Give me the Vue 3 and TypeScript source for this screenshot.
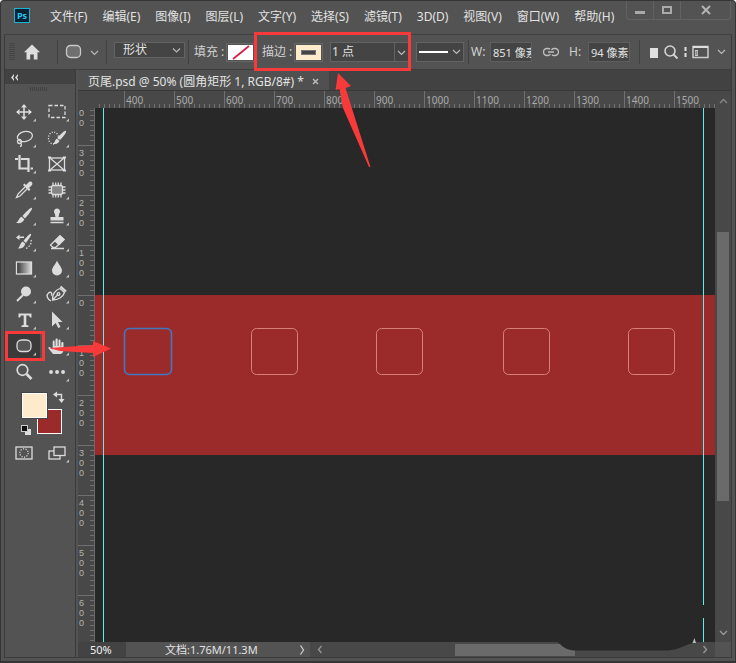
<script setup lang="ts">
import { ref } from 'vue'

const menus: string[] = [
  '文件(F)', '编辑(E)', '图像(I)', '图层(L)', '文字(Y)', '选择(S)',
  '滤镜(T)', '3D(D)', '视图(V)', '窗口(W)', '帮助(H)',
]

interface Tool { id: string; label: string; corner: boolean }

const tools: Tool[] = [
  { id: 'move', label: '移动工具', corner: true },
  { id: 'marquee', label: '矩形选框工具', corner: true },
  { id: 'lasso', label: '套索工具', corner: true },
  { id: 'quick', label: '快速选择工具', corner: true },
  { id: 'crop', label: '裁剪工具', corner: true },
  { id: 'frame', label: '图框工具', corner: false },
  { id: 'dropper', label: '吸管工具', corner: true },
  { id: 'heal', label: '修补工具', corner: true },
  { id: 'brush', label: '画笔工具', corner: true },
  { id: 'stamp', label: '仿制图章工具', corner: true },
  { id: 'history', label: '历史记录画笔工具', corner: true },
  { id: 'eraser', label: '橡皮擦工具', corner: true },
  { id: 'gradient', label: '渐变工具', corner: true },
  { id: 'blur', label: '模糊工具', corner: true },
  { id: 'dodge', label: '减淡工具', corner: true },
  { id: 'pen', label: '弯度钢笔工具', corner: true },
  { id: 'type', label: '文字工具', corner: true },
  { id: 'select', label: '路径选择工具', corner: true },
  { id: 'shape', label: '圆角矩形工具', corner: true },
  { id: 'hand', label: '抓手工具', corner: true },
  { id: 'zoom', label: '缩放工具', corner: false },
  { id: 'more', label: '编辑工具栏', corner: true },
]

const activeTool = ref('shape')
const shapeMode = ref('形状')
const strokeWidth = ref('1 点')
const shapeW = ref('851 像素')
const shapeH = ref('94 像素')
const zoomLevel = ref('50%')

const rulerX: number[] = Array.from({ length: 12 }, (_, i) => 400 + i * 100)
// The first mark is scrolled half out of view, so only its last digits remain.
const rulerY: string[] = ['00', '300', '200', '100', '0', '100', '200', '300', '400', '500', '600']
const boxes: number[] = [156, 281, 408, 533]
</script>

<template>
  <div class="window">
    <header class="titlebar">
      <div class="logo">Ps</div>
      <nav class="menus">
        <button v-for="m in menus" :key="m" type="button">{{ m }}</button>
      </nav>
      <div class="winbtns">
        <button type="button" aria-label="最小化">
          <svg width="12" height="12"><path d="M1 8.500H11" stroke="#aaa" stroke-width="3" /></svg>
        </button>
        <button type="button" aria-label="最大化">
          <svg width="12" height="12"><rect x="2" y="3" width="8" height="6" fill="none" stroke="#aaa" stroke-width="2" /></svg>
        </button>
        <button type="button" aria-label="关闭" class="close">
          <svg width="12" height="12"><path d="M2 2L10 10M10 2L2 10" stroke="#b4b4b4" stroke-width="2" /></svg>
        </button>
      </div>
    </header>

    <div class="panels">
      <div class="options">
        <div class="group g-home">
          <span class="grip"></span>
          <button type="button" aria-label="主页">
            <svg width="18" height="18" viewBox="0 0 18 18"><path d="M9 1.500L1 9.200H3.500V16.500H7.200V11.500H10.800V16.500H14.500V9.200H17Z" fill="#dedede" /></svg>
          </button>
        </div>
        <div class="group g-preset">
          <button type="button" aria-label="工具预设">
            <svg width="34" height="16" viewBox="0 0 34 16">
              <rect x="1.500" y="1.500" width="14" height="12" rx="4" fill="#707070" stroke="#c8c8c8" stroke-width="1.300" />
              <path d="M26 7L29.500 10.500L33 7" fill="none" stroke="#b8b8b8" stroke-width="1.200" />
            </svg>
          </button>
        </div>
        <div class="group g-mode">
          <div class="pick">
            <select v-model="shapeMode" aria-label="工具模式"><option>形状</option><option>路径</option><option>像素</option></select>
            <svg width="9" height="9"><path d="M1 2.500L4.500 6L8 2.500" fill="none" stroke="#b8b8b8" stroke-width="1.200" /></svg>
          </div>
        </div>
        <div class="group g-paint">
          <span class="lab">填充 :</span>
          <button type="button" class="swatch" aria-label="填充颜色">
            <svg width="25" height="15"><rect width="25" height="15" fill="#fff" /><path d="M5 14L21 1" stroke="#d3224a" stroke-width="1.800" /></svg>
          </button>
          <span class="lab">描边 :</span>
          <button type="button" class="swatch" aria-label="描边颜色">
            <svg width="25" height="15"><rect width="25" height="15" fill="#fdebcb" /><rect x="5.500" y="5.500" width="14" height="4" fill="#454545" stroke="#777" /></svg>
          </button>
          <div class="combo">
            <input v-model="strokeWidth" type="text" aria-label="描边宽度" />
            <button type="button" aria-label="选择描边宽度">
              <svg width="9" height="9"><path d="M1 3L4.500 6.500L8 3" fill="none" stroke="#b8b8b8" stroke-width="1.200" /></svg>
            </button>
          </div>
          <button type="button" class="linestyle" aria-label="描边类型">
            <svg width="42" height="10"><path d="M0 5H29" stroke="#fff" stroke-width="2" /><path d="M34 3L37.500 6.500L41 3" fill="none" stroke="#b8b8b8" stroke-width="1.200" /></svg>
          </button>
        </div>
        <div class="group g-size">
          <label for="w">W:</label>
          <input id="w" v-model="shapeW" type="text" />
          <button type="button" aria-label="链接宽高">
            <svg width="16" height="10" viewBox="0 0 16 10" fill="none" stroke="#c0c0c0" stroke-width="1.400">
              <path d="M7 2.200A3 3 0 0 0 4.500 1.500H4A3.500 3.500 0 0 0 4 8.500H5A3 3 0 0 0 7.500 7" /><path d="M9 7.800A3 3 0 0 0 11.500 8.500H12A3.500 3.500 0 0 0 12 1.500H11A3 3 0 0 0 8.500 3" /><path d="M5 5H11" />
            </svg>
          </button>
          <label for="h">H:</label>
          <input id="h" v-model="shapeH" type="text" />
        </div>
        <div class="group g-end">
          <button type="button" aria-label="路径操作"><svg width="8" height="14"><rect x="0" y="3" width="8" height="10" fill="#e0e0e0" /></svg></button>
          <button type="button" aria-label="搜索"><svg width="16" height="16"><circle cx="7" cy="7" r="5" fill="none" stroke="#d4d4d4" stroke-width="1.600" /><path d="M10.500 10.500L14.500 14.500" stroke="#d4d4d4" stroke-width="2" /></svg></button>
          <svg width="3" height="16"><path d="M1.500 3V7M1.500 9V13" stroke="#e0e0e0" stroke-width="2" /></svg>
          <button type="button" aria-label="工作区">
            <svg width="34" height="14"><rect x="1" y="1.500" width="15" height="11" fill="none" stroke="#ccc" stroke-width="1.500" /><path d="M1 2H16" stroke="#ddd" stroke-width="2" /><rect x="3" y="5" width="3" height="6" fill="#ccc" /><path d="M3.500 7H5.500M3.500 9H5.500" stroke="#555" /><path d="M26 5L29.500 8.500L33 5" fill="none" stroke="#b8b8b8" stroke-width="1.200" /></svg>
          </button>
          <svg class="more" width="2" height="16"><path d="M1 0V16" stroke="#ddd" stroke-width="2" stroke-dasharray="2 1 1 2" /></svg>
        </div>
      </div>

      <div class="body">
        <aside class="toolbar">
          <button type="button" class="collapse" aria-label="折叠">
            <svg width="9" height="7"><path d="M4 0L1 3.500L4 7V5L3 3.500L4 2ZM8 0L5 3.500L8 7V5L7 3.500L8 2Z" fill="#ddd" /></svg>
          </button>
          <div class="handle"><span></span></div>
          <div class="tools">
            <button
              v-for="t in tools" :key="t.id" type="button" :aria-label="t.label"
              :class="{ active: activeTool === t.id }" @click="activeTool = t.id"
            >
              <svg width="33" height="26" viewBox="-17 -13 33 26" fill="none" stroke="#dcdcdc" stroke-width="1.300">
                <template v-if="t.id === 'move'">
                  <path d="M0 -6V6M-6 0H6" stroke-width="1.600" />
                  <path d="M0 -8L3 -4.500H-3ZM0 8L3 4.500H-3ZM-8 0L-4.500 -3V3ZM8 0L4.500 -3V3Z" fill="#dcdcdc" stroke="none" />
                </template>
                <rect v-else-if="t.id === 'marquee'" x="-8" y="-6.500" width="16" height="12" stroke-dasharray="3.500 2" />
                <template v-else-if="t.id === 'lasso'">
                  <ellipse cx="1" cy="-1.500" rx="7.600" ry="5" transform="rotate(-12 1 -1)" />
                  <circle cx="-4.500" cy="3.500" r="2" /><path d="M-4 5C-2 6 -2 8 -4 8.500" />
                </template>
                <template v-else-if="t.id === 'quick'">
                  <ellipse cx="-3.500" cy="0" rx="5" ry="6" stroke-dasharray="1.200 1.400" />
                  <path d="M9 -7C10 -6 6 -1 3 2L0.500 -0.500C4 -4 8 -8 9 -7Z" fill="#dcdcdc" stroke="none" />
                  <path d="M0 0.500L2.500 3C1 6 -2 6 -4 6C-2 4 -2 1.500 0 0.500Z" fill="#dcdcdc" stroke="none" />
                </template>
                <path v-else-if="t.id === 'crop'" d="M-9 -5H-6M-4.500 -9V4.500H5M6.500 4.500H9M-3 -5H4.500V8" stroke-width="2.200" />
                <template v-else-if="t.id === 'frame'">
                  <rect x="-7.500" y="-6" width="15" height="12" /><path d="M-7 -6L7 6M7 -6L-7 6" />
                  <path d="M-9 -6.500H-6M6 -6.500H9M-9 6.500H-6M6 6.500H9" stroke-width="2" />
                </template>
                <template v-else-if="t.id === 'dropper'">
                  <path d="M1 -3L-6 4L-7.500 7.500L-4 6L3 -1" />
                  <path d="M-1 -5L0.500 -6.500L2 -5L5 -8C7 -9.500 9.500 -7 8 -5L5 -2L6.500 -0.500L5 1Z" fill="#dcdcdc" stroke="none" />
                </template>
                <template v-else-if="t.id === 'heal'">
                  <rect x="-5.500" y="-4.500" width="11" height="9" rx="2" fill="#858585" />
                  <path d="M-4 -7.500V-5M-1.300 -7.500V-5M1.300 -7.500V-5M4 -7.500V-5M-4 5V7.500M-1.300 5V7.500M1.300 5V7.500M4 5V7.500M-8.500 -3H-6M-8.500 0H-6M-8.500 3H-6M6 -3H8.500M6 0H8.500M6 3H8.500" />
                </template>
                <path v-else-if="t.id === 'brush'" d="M8 -8C9 -7 4 -1 1 2.500L-1.500 0C2 -4 7 -9 8 -8ZM-2.300 0.800L0.300 3.300C-1 7 -4 7.500 -8 7C-5 5.500 -5.500 2 -2.300 0.800Z" fill="#dcdcdc" stroke="none" />
                <path v-else-if="t.id === 'stamp'" d="M0 -7.500A3 3 0 0 1 2.300 -2.500L1.500 1H6.500V4.500H-6.500V1H-1.500L-2.300 -2.500A3 3 0 0 1 0 -7.500ZM-6.500 5.700H6.500V7.200H-6.500Z" fill="#dcdcdc" stroke="none" />
                <template v-else-if="t.id === 'history'">
                  <path d="M7 -8C8 -7 4 -2 2 1L-0.500 -1C2 -4 6 -9 7 -8ZM-1.300 -0.500L1.300 1.800C0 6 -3 7 -6 6.500C-4 5 -4 1 -1.300 -0.500Z" fill="#dcdcdc" stroke="none" />
                  <path d="M-8 -4.500L-4.500 -7.500V-5.500H0V-4H-4.500V-2Z" fill="#dcdcdc" stroke="none" />
                  <path d="M7 -2C8 2 5 5 2 6.500" stroke-dasharray="1.500 1.500" />
                </template>
                <template v-else-if="t.id === 'eraser'">
                  <path d="M-6.500 3L3 -6L7 -2.500L-1.500 5.500H-4Z" /><path d="M-2 -1L3 -6L7 -2.500L2 2.500Z" fill="#dcdcdc" /><path d="M-6 6.500H7" />
                </template>
                <template v-else-if="t.id === 'gradient'">
                  <defs><linearGradient id="grad"><stop offset="0" stop-color="#333" /><stop offset="1" stop-color="#ddd" /></linearGradient></defs>
                  <rect x="-7.500" y="-6" width="15" height="12" fill="url(#grad)" />
                </template>
                <path v-else-if="t.id === 'blur'" d="M0 -7.500C1 -4 5 -1 5 2.500A5 5 0 0 1 -5 2.500C-5 -1 -1 -4 0 -7.500Z" fill="#dcdcdc" stroke="none" />
                <template v-else-if="t.id === 'dodge'">
                  <circle cx="2" cy="-2.500" r="5" fill="#dcdcdc" stroke="none" /><path d="M-1 1L-7 7" stroke-width="2" />
                </template>
                <template v-else-if="t.id === 'pen'">
                  <path d="M-4.500 6C-5 1 -2 -4 3 -5.500L7.500 -1.500C6 3 1 6 -4.500 6ZM-4 5.500L1 0.500" /><circle cx="1.500" cy="0" r="1.300" />
                  <path d="M3.500 -7.500L9 -2.500" stroke-width="2.200" /><path d="M-6 7C-10 5 -11 1 -8.500 -1C-6 -3 -4 0 -6 1.500" />
                </template>
                <path v-else-if="t.id === 'type'" d="M-5.500 -6.500H7.500V-2.500H6L5 -4.500H2.300V5L4.500 5.500V7H-2.500V5.500L-0.300 5V-4.500H-3L-4 -2.500H-5.500Z" fill="#dcdcdc" stroke="none" />
                <path v-else-if="t.id === 'select'" d="M-5 -8.500L5.500 2H1L3.500 7L1.200 8L-1.300 3L-5 6.500Z" fill="#dcdcdc" stroke="none" />
                <rect v-else-if="t.id === 'shape'" x="-7" y="-6" width="14" height="11.500" rx="4.500" fill="#565656" />
                <path v-else-if="t.id === 'hand'" d="M-4 8L-8.500 2.500C-9 1 -7.500 0.500 -6.500 1.500L-4.300 3.500V-4.500C-4.300 -6 -2.300 -6 -2.300 -4.500V0H-1.500V-6.500C-1.500 -8 0.700 -8 0.700 -6.500V0H1.500V-5.500C1.500 -7 3.500 -7 3.500 -5.500V0.500H4.300V-3C4.300 -4.500 6.500 -4.500 6.500 -3V3C6.500 6 5.500 7 4 8Z" fill="#dcdcdc" stroke="none" />
                <template v-else-if="t.id === 'zoom'">
                  <circle cx="-1.500" cy="-2" r="5.300" stroke-width="1.700" /><path d="M2.500 2L7.500 7" stroke-width="2.600" />
                </template>
                <path v-else d="M-6 0H-5.900M0 0H0.100M6 0H6.100" stroke-width="3.800" stroke-linecap="round" />
                <path v-if="t.corner" d="M12 6.500V9.500H9Z" fill="#c4c4c4" stroke="none" />
              </svg>
            </button>
          </div>
          <div class="colors">
            <button type="button" class="bg" aria-label="背景色"></button>
            <button type="button" class="fg" aria-label="前景色"></button>
            <button type="button" class="swap" aria-label="切换颜色">
              <svg width="12" height="12"><path d="M3 3.500H8.500V9" fill="none" stroke="#ddd" stroke-width="1.400" /><path d="M0 3.500L4 0.500V6.500ZM8.500 12L5.500 8H11.500Z" fill="#ddd" /></svg>
            </button>
            <button type="button" class="reset" aria-label="默认颜色">
              <svg width="11" height="11"><rect x="4" y="4" width="6" height="6" fill="#ddd" /><rect x="0.500" y="0.500" width="6" height="6" fill="#111" stroke="#ccc" /></svg>
            </button>
          </div>
          <div class="modes">
            <button type="button" aria-label="快速蒙版">
              <svg width="33" height="26" viewBox="-17 -13 33 26" fill="none" stroke="#dcdcdc"><rect x="-8" y="-6" width="16" height="12" stroke-width="1.300" /><circle r="4.200" stroke-width="1.200" stroke-dasharray="1.200 1.400" /></svg>
            </button>
            <button type="button" aria-label="屏幕模式">
              <svg width="33" height="26" viewBox="-17 -13 33 26" fill="none" stroke="#dcdcdc" stroke-width="1.300"><rect x="-8" y="-2" width="11" height="8" /><rect x="-3" y="-6" width="11" height="8.500" fill="#535353" /><path d="M12 6.500V9.500H9Z" fill="#c4c4c4" stroke="none" /></svg>
            </button>
          </div>
        </aside>

        <main class="doc">
          <div class="tabs">
            <div class="tab">
              <span>页尾.psd @ 50% (圆角矩形 1, RGB/8#) *</span>
              <button type="button" aria-label="关闭文档"><svg width="7" height="7"><path d="M1 1L6 6M6 1L1 6" stroke="#bbb" stroke-width="1.500" /></svg></button>
            </div>
          </div>
          <div class="work">
            <div class="origin"></div>
            <div class="ruler-x"><span v-for="n in rulerX" :key="n">{{ n }}</span></div>
            <div class="scroll-v">
              <button type="button" aria-label="向上滚动"><svg width="9" height="9"><path d="M1 6L4.500 2.500L8 6" fill="none" stroke="#888" stroke-width="1.300" /></svg></button>
              <div class="track"><i></i></div>
              <button type="button" aria-label="向下滚动"><svg width="9" height="9"><path d="M1 3L4.500 6.500L8 3" fill="none" stroke="#999" stroke-width="1.300" /></svg></button>
            </div>
            <div class="ruler-y">
              <div v-for="(n, i) in rulerY" :key="i" class="mark"><span v-for="(d, j) in n" :key="j">{{ d }}</span></div>
            </div>
            <div class="stage">
              <svg width="100%" height="100%">
                <rect y="187" width="100%" height="160" fill="#9b2b2b" />
                <path d="M8.500 0V1200M608.500 0V1200" stroke="#5cf0e6" />
                <rect x="29.500" y="220.500" width="47" height="46" rx="5" fill="none" stroke="#4278c0" stroke-width="1.600" />
                <rect v-for="x in boxes" :key="x" :x="x + 0.5" y="220.500" width="46" height="46" rx="5" fill="none" stroke="#d9807a" />
              </svg>
            </div>
          </div>
          <footer class="status">
            <input v-model="zoomLevel" type="text" aria-label="缩放比例" />
            <div class="info"><span>文档:1.76M/11.3M</span><button type="button" aria-label="文档信息"><svg width="6" height="12"><path d="M1.500 1.500L4.500 6L1.500 10.500" fill="none" stroke="#ccc" stroke-width="1.300" /></svg></button></div>
            <div class="scroll-h">
              <button type="button" aria-label="向左滚动"><svg width="8" height="9"><path d="M5.500 1L2.500 4.500L5.500 8" fill="none" stroke="#999" stroke-width="1.200" /></svg></button>
              <div class="track"><i></i></div>
              <button type="button" aria-label="向右滚动"><svg width="8" height="9"><path d="M2.500 1L5.500 4.500L2.500 8" fill="none" stroke="#999" stroke-width="1.300" /></svg></button>
            </div>
          </footer>
        </main>
      </div>
    </div>

    <svg class="notes" width="100%" height="100%" aria-hidden="true">
      <path d="M556 641C562 645 564 650 574 650.500H668C678 650 684 645 696 642V636H556Z" fill="#282828" />
      <path d="M692.500 643L694.500 638L696 643Z" fill="#bbb" />
      <rect x="702" y="605" width="3" height="13" fill="#282828" />
      <rect x="255.500" y="33.500" width="154" height="36" fill="none" stroke="#f83a3a" stroke-width="3" />
      <path d="M338 73L351 86L345.500 88L370.500 167L369 167L343 108L339.500 89L335.500 90Z" fill="#f83a3a" />
      <rect x="6.500" y="332.500" width="37" height="27" fill="none" stroke="#f83a3a" stroke-width="3" />
      <path d="M49 348L93 345V341L111 348.500L93 357V353L60 351Z" fill="#f83a3a" />
    </svg>
  </div>
</template>

<style>
body { background: #fff; }
</style>

<style scoped>
.window {
  position: relative; display: flex; flex-direction: column; min-height: 100vh; box-sizing: border-box;
  background: #535353; border: 1px solid #353535; border-bottom-width: 2px; border-radius: 4px 4px 0 0; color: #e2e2e2;
  font: 12px/16px "Noto Sans", "Noto Sans CJK SC", sans-serif; overflow: hidden;
}
button, input, select { font: inherit; color: inherit; background: none; border: 0; padding: 0; margin: 0; border-radius: 0; box-sizing: border-box; outline: 0; }
button { display: flex; align-items: center; justify-content: center; }
svg { display: block; flex: none; }

.titlebar { display: flex; height: 33px; }
.logo {
  width: 16px; height: 15px; margin: 7px 0 0 13px; box-sizing: border-box; border: 1px solid #1fb0d6; background: #062233;
  color: #2cc6f0; font: bold 9px/13px "Open Sans", sans-serif; text-align: center;
}
.menus { display: flex; gap: 15px; margin: 8px 0 0 20px; height: 16px; white-space: nowrap; }
.winbtns { display: flex; margin-left: auto; margin-right: 4px; height: 19px; border: 1px solid #626262; border-top: 0; border-radius: 0 0 3px 3px; box-sizing: border-box; }
.winbtns button { width: 27px; border-right: 1px solid #626262; }
.winbtns .close { width: 49px; border-right: 0; }

.panels { flex: 1; display: flex; flex-direction: column; margin: 0 3px 3px; border: 1px solid #3b3b3b; border-top-color: #424242; }
.options { display: flex; height: 35px; box-sizing: border-box; border-bottom: 1px solid #3d3d3d; }
.group { display: flex; align-items: center; flex: none; box-sizing: border-box; height: 24px; margin-top: 5px; border-right: 1px solid #414141; }
.g-home { width: 53px; padding-left: 4px; gap: 8px; }
.grip { width: 6px; height: 18px; background: repeating-linear-gradient(#454545 0 1px, transparent 1px 2px); }
.g-preset { width: 49px; padding-left: 7px; }
.g-mode { width: 82px; padding-left: 7px; }
.pick { display: grid; align-items: center; width: 71px; height: 16px; margin-bottom: 4px; box-sizing: border-box; border: 1px solid #636363; background: #444; }
.pick > * { grid-area: 1 / 1; }
.pick select { appearance: none; width: 100%; height: 14px; line-height: 14px; padding-left: 8px; }
.pick svg { justify-self: end; margin-right: 3px; pointer-events: none; }
.g-paint { width: 280px; padding-left: 5px; }
.lab { width: 32px; white-space: nowrap; color: #d0d0d0; }
.swatch { width: 29px; height: 19px; border: 1px solid #666; margin-right: 7px; }
.combo { display: flex; width: 79px; height: 20px; margin-right: 7px; box-sizing: border-box; border: 1px solid #636363; background: #444; }
.combo input { width: 63px; padding-left: 1px; }
.combo button { width: 14px; border-left: 1px solid #636363; }
.linestyle { width: 48px; height: 20px; background: #444; border: 1px solid #636363; }
.g-size { width: 171px; padding-left: 2px; }
.g-size label { width: 19px; color: #d0d0d0; }
.g-size input { width: 42px; height: 20px; padding-left: 2px; border: 1px solid #5e5e5e; background: #444; font-size: 11px; }
.g-size button { width: 37px; }
.g-end { flex: 1; border: 0; padding-left: 10px; gap: 5px; overflow: hidden; min-width: 0; }
.more { margin-left: auto; }

.body { flex: 1; display: flex; }
.toolbar { width: 70px; flex: none; border-right: 1px solid #3a3a3a; }
.collapse { width: 100%; height: 14px; background: #424242; justify-content: flex-start; padding-left: 5px; }
.handle { height: 15px; padding: 3px 0 0 25px; box-sizing: border-box; }
.handle span { display: block; width: 18px; height: 4px; background: repeating-linear-gradient(90deg, #414141 0 1px, transparent 1px 2px); }
.tools, .modes { display: grid; grid-template-columns: 33px 33px; grid-auto-rows: 26px; padding-left: 2px; }
.tools .active { background: #3a3a3a; }
.colors { position: relative; height: 55px; }
.colors button { position: absolute; }
.colors .fg { left: 17px; top: 8px; width: 25px; height: 25px; background: #fdebcb; border: 1px solid #fff; outline: 1px solid #444; }
.colors .bg { left: 32px; top: 24px; width: 25px; height: 25px; background: #9b2b2b; border: 1px solid #fff; }
.colors .swap { left: 48px; top: 6px; }
.colors .reset { left: 16px; top: 40px; }

.doc { flex: 1; min-width: 0; display: flex; flex-direction: column; margin-left: 2px; }
.tabs { display: flex; height: 21px; background: #424242; border-bottom: 1px solid #383838; box-sizing: border-box; }
.tab { display: flex; align-items: center; gap: 8px; padding: 3px 10px 0; background: #505050; white-space: nowrap; }
.work { flex: 1; display: grid; grid-template-columns: 17px minmax(0, 1fr) 16px; grid-template-rows: 17px minmax(0, 1fr); }
.origin, .ruler-x, .ruler-y { background: #484848; color: #aaa; font-size: 10px; line-height: 10px; }
.ruler-x { display: flex; padding-left: 29px; overflow: hidden; background: repeating-linear-gradient(90deg, #707070 0 1px, transparent 1px 5px) 4px 100% / 100% 4px no-repeat #484848; }
.ruler-x span { flex: none; width: 50px; box-sizing: border-box; border-left: 1px solid #707070; padding: 4px 0 0 1px; }
.ruler-y { grid-area: 2 / 1; overflow: hidden; background: repeating-linear-gradient(#707070 0 1px, transparent 1px 5px) 100% 2px / 4px 100% no-repeat #484848; border-right: 1px solid #6a6a6a; font: 9px/10px "Liberation Sans", sans-serif; color: #b4b4b4; }
.mark { height: 50px; box-sizing: border-box; border-top: 1px solid #707070; padding: 2px 0 0 1px; }
.mark:first-child { height: 37px; border-top: 0; padding-top: 0; }
.mark:last-child { height: auto; }
.mark span { display: block; height: 10px; }
.stage { grid-area: 2 / 2; background: #282828; overflow: hidden; position: relative; }
.stage svg { position: absolute; left: 0; top: 0; }
.scroll-v { grid-area: 1 / 3 / 3 / 4; background: #484848; display: flex; flex-direction: column; align-items: center; }
.scroll-v button { width: 16px; height: 20px; }
.scroll-v .track { flex: 1; display: grid; grid-template-rows: 121fr 269fr 121fr; width: 12px; }
.scroll-v i { grid-row: 2; background: #6a6a6a; }
.status { display: flex; height: 15px; line-height: 15px; }
.status input { width: 48px; height: 15px; padding-left: 12px; background: #434343; color: #f0f0f0; font-size: 11px; }
.info { display: flex; align-items: center; justify-content: space-between; width: 184px; padding: 0 5px 0 39px; box-sizing: border-box; font-size: 11px; }
.scroll-h { flex: 1; display: flex; margin-right: 16px; background: #484848; }
.scroll-h button { width: 20px; }
.scroll-h .track { flex: 1; display: grid; grid-template-columns: 125fr 120fr 120fr; padding: 2px 0 1px; }
.scroll-h i { grid-column: 2; background: #6a6a6a; }
.notes { position: absolute; left: -1px; top: -1px; width: calc(100% + 2px); height: calc(100% + 3px); pointer-events: none; }
</style>
